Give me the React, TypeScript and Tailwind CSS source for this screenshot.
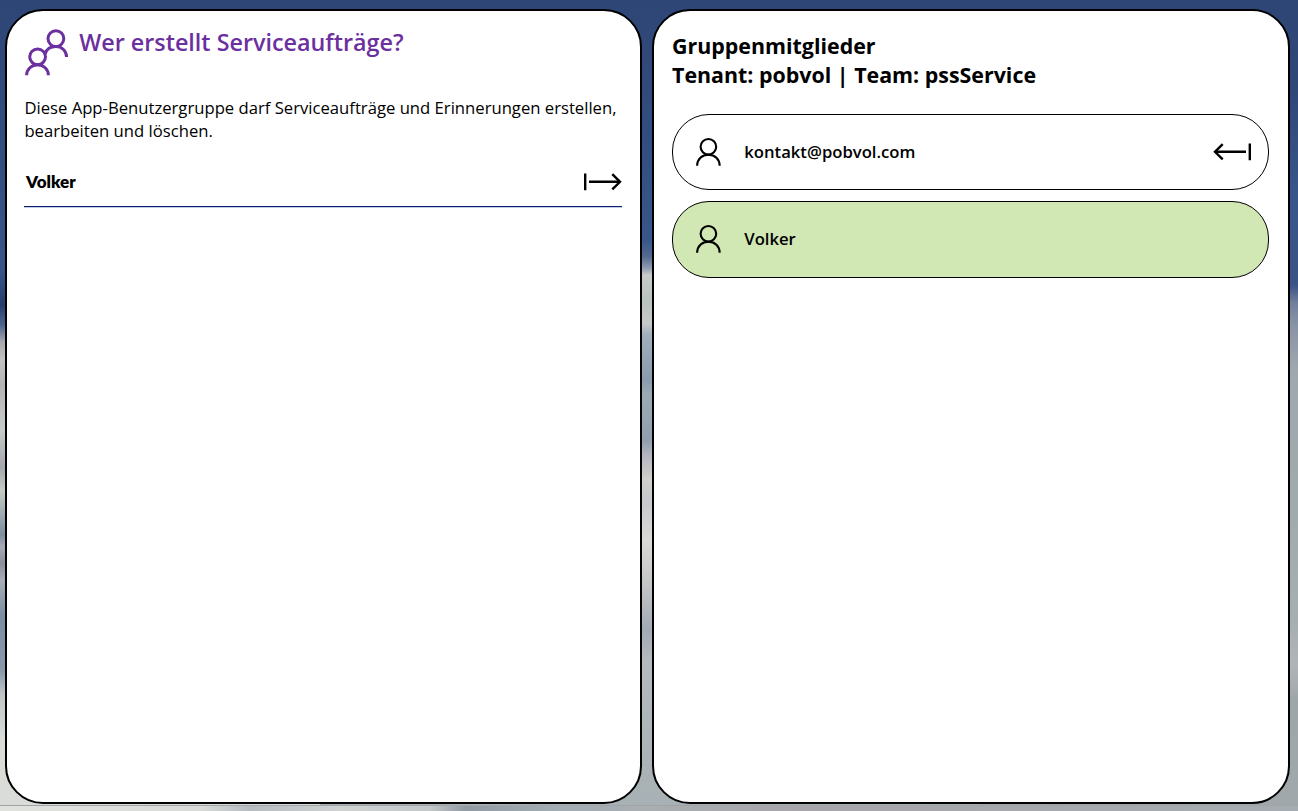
const PersonIcon = () => (
  <svg className="h-[30px] w-[28px] shrink-0" viewBox="0 0 28 30" fill="none" stroke="currentColor" strokeWidth="2.1">
    <circle cx="14.4" cy="9.8" r="7.8" />
    <path d="M3.1 28.7C3.2 22.1 8 17.7 14.4 17.7S25.6 22.1 25.7 28.7" />
  </svg>
);

const PeopleIcon = () => (
  <svg className="h-[48px] w-[45px] shrink-0" viewBox="0 0 45 48" fill="none" stroke="currentColor" strokeWidth="3">
    <circle cx="31.9" cy="10.6" r="7.9" />
    <circle cx="13.6" cy="28.8" r="7.9" />
    <path d="M2.6 47.2C2.8 41.2 7.6 36.8 13.6 36.8S24.2 41.2 24.4 47.2" />
    <path d="M21.1 26C22.6 21.2 26.6 18.6 31.9 18.6C37.9 18.6 42.4 22.9 42.6 29" />
  </svg>
);

const ArrowIcon = ({ flipped = false }: { flipped?: boolean }) => (
  <svg
    className={flipped ? "h-[18px] w-[38px] shrink-0 -scale-x-100" : "h-[18px] w-[38px] shrink-0"}
    viewBox="0 0 38 18"
    fill="none"
    stroke="currentColor"
    strokeWidth="2.4"
  >
    <path d="M1.2 .6V17.2M5 8.8H36" />
    <path d="M28.3 1.2L36 8.8L28.3 16.4" />
  </svg>
);

const Member = ({ name, assignable }: { name: string; assignable: boolean }) => (
  <li
    className={`flex items-center rounded-[37px] border border-black pr-[17px] pl-[21px] ${
      assignable ? "h-[76px] bg-white" : "h-[77px] bg-[#d1e8b4] pb-[1px]"
    }`}
  >
    <PersonIcon />
    <span className="ml-[22.3px] flex-1 text-[16.67px] leading-[24px] font-semibold">{name}</span>
    {assignable && <ArrowIcon flipped />}
  </li>
);

const Backdrop = () => (
  <div className="absolute inset-0 -z-10 flex flex-col">
    <div className="flex flex-1 justify-between">
      <div className="w-[320px] bg-[linear-gradient(180deg,#2e4676_0px,#304b7d_100px,#38558a_270px,#263e6b_305px,#4b6591_325px,#a8a9ac_342px,#c1c2c1_360px,#b3b5b5_385px,#c7cbc8_430px,#a4a6ad_467px,#c4cbc4_490px,#7c8f9f_535px,#a7aab4_547px,#898e97_563px,#a8adb8_580px,#7b8fa1_615px,#8798a9_670px,#c1c6c5_695px,#d9dcd7_740px,#dadcd9_811px)]" />
      <div className="flex-1 bg-[linear-gradient(180deg,#2e4676_0px,#304b7c_100px,#38568b_240px,#50698f_256px,#8d9bb0_268px,#c8cbcb_275px,#b8c2be_300px,#c6c8c9_323px,#a0afbb_335px,#8a9baf_380px,#9ba9b3_395px,#929eae_440px,#b8b8c2_458px,#d0d0cc_480px,#c6c8cc_500px,#d9d9d6_540px,#c6c8c7_580px,#a3aab5_630px,#b4babd_660px,#a7b0b4_811px)]" />
      <div className="w-[320px] bg-[linear-gradient(180deg,#2e4676_0px,#2f4676_80px,#38558a_200px,#3b5385_285px,#71809c_303px,#8893a6_325px,#a0a8ad_370px,#a0abae_500px,#a6aeb0_620px,#b0b4b8_665px,#9fa6aa_700px,#a0a8ac_811px)]" />
    </div>
    <div className="h-[6px] border-t border-[#a0a4a6] bg-[linear-gradient(90deg,#dfe2dd_0px,#d8dbd8_200px,#b7bcc0_250px,#d0d2d2_340px,#c5c8c9_430px,#929ba3_465px,#a3adb4_560px,#a9aeb1_650px,#a8a6aa_800px,#a6adb2_1298px)]" />
  </div>
);

export default function App() {
  return (
    <main className="relative isolate flex h-[811px] w-[1298px] gap-[10px] overflow-hidden pt-[9px] pr-[8px] pb-[7px] pl-[5px] font-['Open_Sans',sans-serif] text-black">
      <Backdrop />
      <section className="w-[637px] rounded-[38px] border-2 border-black bg-white px-[17px] pt-[17px]">
        <header className="flex text-[#6b2fa0]">
          <PeopleIcon />
          <h1 className="-mt-[2px] ml-[10.2px] text-[23.33px] leading-[33px] font-semibold whitespace-nowrap">Wer erstellt Serviceaufträge?</h1>
        </header>
        <p className="mt-[20px] ml-[0.4px] text-[16.67px] leading-[23px] whitespace-nowrap">
          Diese App-Benutzergruppe darf Serviceaufträge und Erinnerungen erstellen,
          <br />
          bearbeiten und löschen.
        </p>
        <div className="mt-[15px] flex h-[50px] w-[598px] items-center border-b border-[#10206f] pl-[2px] shadow-[0_1px_0_#c0cce6]">
          <span className="flex-1 font-[Lato] text-[17px] font-extrabold">Volker</span>
          <ArrowIcon />
        </div>
      </section>
      <section className="w-[638px] rounded-[38px] border-2 border-black bg-white px-[18px] pt-[20px]">
        <h2 className="text-[21.4px] leading-[29px] font-bold whitespace-nowrap">
          Gruppenmitglieder
          <br />
          Tenant: pobvol | Team: pssService
        </h2>
        <ul className="mt-[25px] flex w-[597px] flex-col gap-[11px]">
          <Member name="kontakt@pobvol.com" assignable />
          <Member name="Volker" assignable={false} />
        </ul>
      </section>
    </main>
  );
}
